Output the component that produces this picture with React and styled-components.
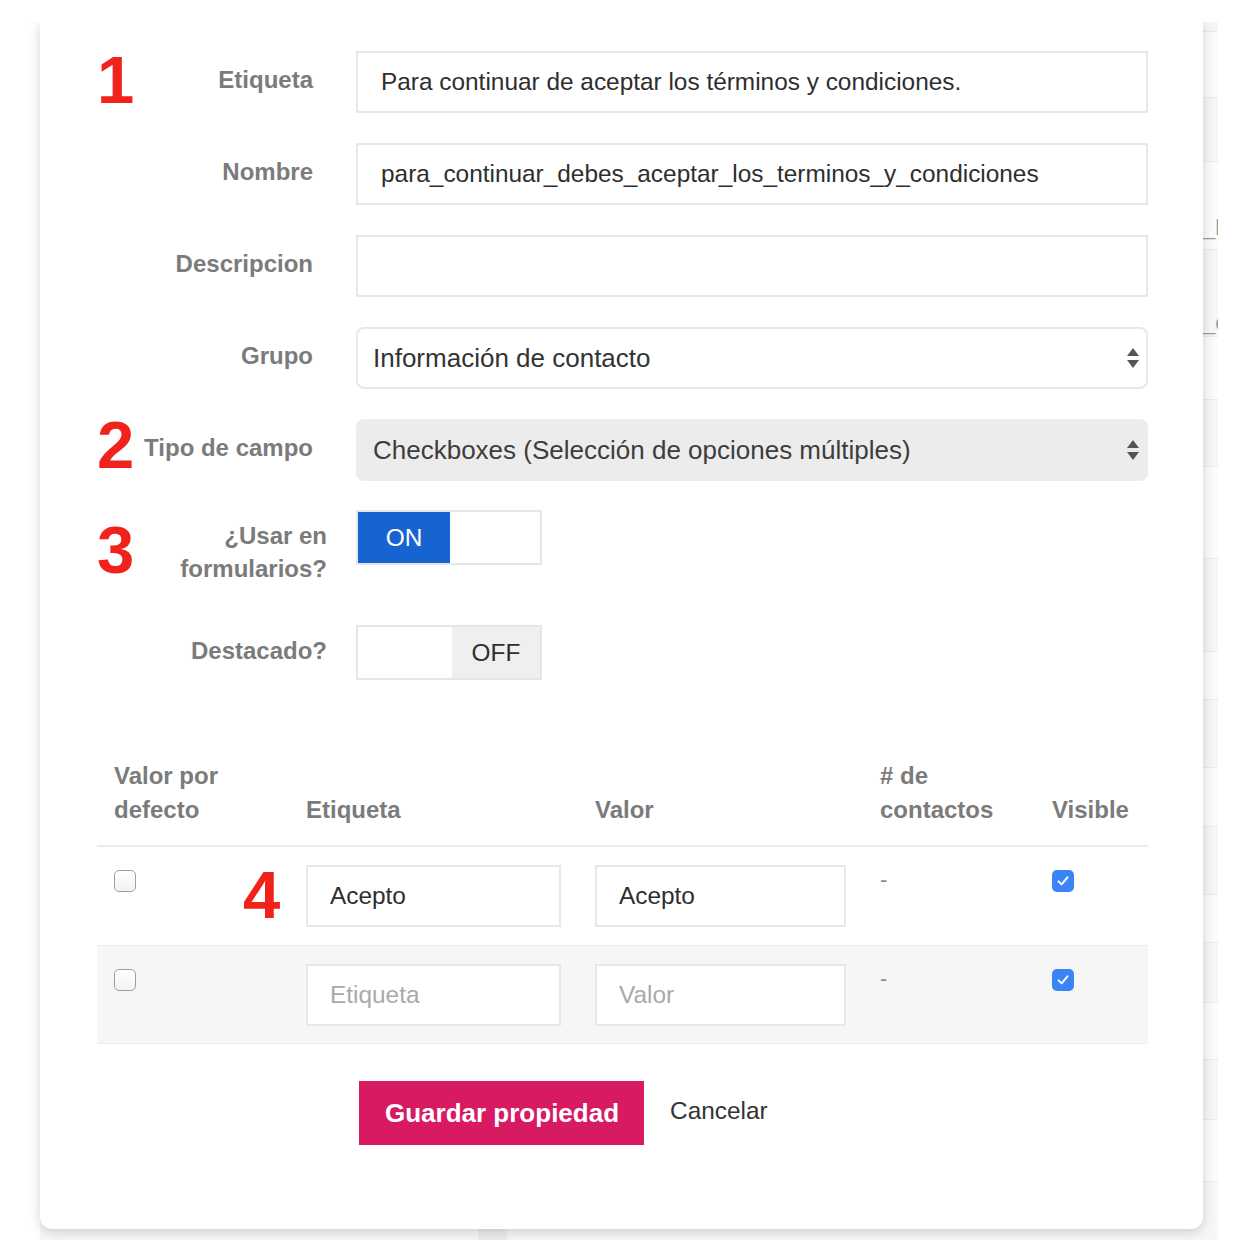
import React from 'react';
import styled, { createGlobalStyle } from 'styled-components';

const GlobalStyle = createGlobalStyle`
  html, body {
    margin: 0;
    padding: 0;
    background: #fff;
  }
  body {
    font-family: "Liberation Sans", Arial, sans-serif;
    color: #333;
  }
  * {
    box-sizing: border-box;
  }
`;

const Canvas = styled.div`
	width: 1242px;
	height: 1240px;
	padding-top: 22px;
	overflow: hidden;
	background: #fff;
`;

// the screenshot area: the page behind and the modal share one grid cell
const Shot = styled.div`
	width: 1218px;
	height: 1218px;
	overflow: hidden;
	display: grid;
	grid-template-columns: 1fr;
	grid-template-rows: 1fr;

	> * {
		grid-area: 1 / 1;
	}
`;

const Backdrop = styled.div`
	margin-left: 40px;
	display: flex;
	flex-direction: column;
`;

const BackRow = styled.div`
	flex: none;
	height: ${p => p.$h}px;
	display: flex;
	align-items: flex-end;
	padding: 0 0 ${p => p.$pb || 0}px 1163px;
	border-bottom: 1px solid #ebebeb;
	background: ${p => (p.$shade ? '#f6f6f6' : '#fbfbfb')};
	font-size: 22px;
	line-height: 26px;
	color: #9c9c9c;
	white-space: nowrap;
`;

const BackFoot = styled.div`
	flex: 1;
	display: flex;
	background: #f7f7f7;
`;

const FootBlock = styled.div`
	margin-left: 438px;
	width: 29px;
	background: #ececec;
`;

const Card = styled.div`
	margin-left: 40px;
	width: 1163px;
	align-self: start;
	background: #fff;
	border-radius: 0 0 12px 12px;
	box-shadow: 0 3px 12px rgba(0, 0, 0, 0.17);
	padding: 29px 55px 84px 57px;
`;

const FormRow = styled.div`
	display: grid;
	grid-template-columns: 259px 792px;
	margin-top: ${p => (p.$mt === undefined ? 30 : p.$mt)}px;
`;

const LabelCell = styled.div`
	display: flex;
	align-items: flex-start;
	padding-right: ${p => (p.$toggle ? 29 : 43)}px;
`;

const Num = styled.span`
	flex: none;
	width: 46px;
	margin-top: ${p => p.$dy || 0}px;
	font-size: 67px;
	font-weight: 700;
	line-height: 1;
	color: #f0221b;
`;

const Label = styled.label`
	flex: 1;
	text-align: right;
	padding-top: ${p => (p.$toggle ? 9 : 12)}px;
	font-size: 24px;
	font-weight: 700;
	line-height: 33px;
	color: #7b7b7b;
	white-space: ${p => (p.$toggle ? 'normal' : 'nowrap')};
`;

const TextInput = styled.input`
	display: block;
	width: 100%;
	height: ${p => p.$h || 62}px;
	margin: 0;
	padding: 0 ${p => p.$px || 23}px;
	border: 2px solid #e8e8e8;
	border-radius: 0;
	background: #fff;
	font: 24.4px "Liberation Sans", Arial, sans-serif;
	color: #2e2e2e;
	outline: none;

	&::placeholder {
		color: #a9a9a9;
	}
`;

const SelectBox = styled.div`
	height: 62px;
	display: flex;
	align-items: center;
	justify-content: space-between;
	padding: 0 7px 0 15px;
	border: 2px solid ${p => (p.$muted ? '#ececec' : '#e8e8e8')};
	border-radius: 8px;
	background: ${p => (p.$muted ? '#ececec' : '#fff')};
	font-size: 26px;
	color: ${p => (p.$muted ? '#3d3d3d' : '#333')};
`;

const Toggle = styled.div`
	width: 186px;
	height: 55px;
	display: flex;
	border: 2px solid #e6e6e6;
`;

const Half = styled.div`
	flex: none;
	width: ${p => p.$w}px;
	display: flex;
	align-items: center;
	justify-content: center;
	font-size: 24.4px;
	background: ${p => (p.$tone === 'on' ? '#1763cf' : p.$tone === 'off' ? '#efefef' : '#fff')};
	color: ${p => (p.$tone === 'on' ? '#fff' : '#2e2e2e')};
`;

const cols = '192px 289px 285px 172px 1fr';

const Table = styled.div`
	margin-top: 79px;
`;

const HeadRow = styled.div`
	display: grid;
	grid-template-columns: ${cols};
	align-items: end;
	padding-bottom: 18px;
	border-bottom: 2px solid #ececec;
`;

const HeadCell = styled.div`
	padding: 0 17px;
	font-size: 24px;
	font-weight: 700;
	line-height: 34px;
	color: #7b7b7b;
`;

const BodyRow = styled.div`
	display: grid;
	grid-template-columns: ${cols};
	align-items: start;
	padding: 18px 0 17px;
	border-bottom: 1px solid #ededed;
	background: ${p => (p.$shaded ? '#f6f6f6' : '#fff')};
`;

const Cell = styled.div`
	display: flex;
	justify-content: space-between;
	align-items: flex-start;
	padding: 0 ${p => (p.$pr === undefined ? 17 : p.$pr)}px 0 17px;
`;

const Dash = styled.span`
	margin-top: 1px;
	font-size: 22px;
	line-height: 28px;
	color: #8a8a8a;
`;

const Box = styled.span`
	display: inline-flex;
	align-items: center;
	justify-content: center;
	width: 22px;
	height: 22px;
	margin-top: 5px;
	border-radius: 5px;
	border: ${p => (p.$checked ? 'none' : '1.5px solid #9f9f9f')};
	background: ${p => (p.$checked ? '#3a84f5' : 'linear-gradient(#fff, #f2f2f2)')};
`;

const Actions = styled.div`
	display: flex;
	align-items: center;
	gap: 26px;
	margin-top: 37px;
	padding-left: 262px;
`;

const SaveButton = styled.button`
	height: 64px;
	padding: 0 25px 0 26px;
	border: none;
	border-radius: 0;
	background: #d71a61;
	color: #fff;
	font: 700 26px "Liberation Sans", Arial, sans-serif;
`;

const CancelLink = styled.span`
	margin-top: -4px;
	font-size: 24.4px;
	color: #333;
`;

const Arrows = () => (
	<svg width="12" height="24" viewBox="0 0 12 24">
		<path d="M6 2 L12 10 H0 Z" fill="#555" />
		<path d="M6 22 L12 14 H0 Z" fill="#555" />
	</svg>
);

const Check = ({ checked }) => (
	<Box $checked={checked}>
		{checked && (
			<svg width="16" height="16" viewBox="0 0 16 16">
				<path d="M3.5 8.4 L6.6 11.4 L12.5 4.4" fill="none" stroke="#fff" strokeWidth="2" strokeLinecap="round" strokeLinejoin="round" />
			</svg>
		)}
	</Box>
);

const backRows = [
	{ h: 10, shade: true },
	{ h: 66 },
	{ h: 64, shade: true },
	{ h: 88, text: '_lo', pb: 8 },
	{ h: 87, shade: true, text: '_c', pb: 0 },
	{ h: 63 },
	{ h: 67, shade: true },
	{ h: 92 },
	{ h: 93, shade: true },
	{ h: 48 },
	{ h: 68, shade: true },
	{ h: 59 },
	{ h: 68, shade: true },
	{ h: 48 },
	{ h: 60, shade: true },
	{ h: 57 },
	{ h: 60, shade: true },
	{ h: 62 },
];

const options = [
	{ label: 'Acepto', value: 'Acepto', mark: '4' },
	{ label: '', value: '' },
];

export default function App() {
	return (
		<Canvas>
			<GlobalStyle />
			<Shot>
				<Backdrop>
					{backRows.map((r, i) => (
						<BackRow key={i} $h={r.h} $shade={r.shade} $pb={r.pb}>
							{r.text}
						</BackRow>
					))}
					<BackFoot>
						<FootBlock />
					</BackFoot>
				</Backdrop>

				<Card>
					<FormRow $mt={0}>
						<LabelCell>
							<Num $dy={-5}>1</Num>
							<Label>Etiqueta</Label>
						</LabelCell>
						<TextInput defaultValue="Para continuar de aceptar los términos y condiciones." />
					</FormRow>

					<FormRow>
						<LabelCell>
							<Label>Nombre</Label>
						</LabelCell>
						<TextInput defaultValue="para_continuar_debes_aceptar_los_terminos_y_condiciones" />
					</FormRow>

					<FormRow>
						<LabelCell>
							<Label>Descripcion</Label>
						</LabelCell>
						<TextInput defaultValue="" />
					</FormRow>

					<FormRow>
						<LabelCell>
							<Label>Grupo</Label>
						</LabelCell>
						<SelectBox>
							<span>Información de contacto</span>
							<Arrows />
						</SelectBox>
					</FormRow>

					<FormRow>
						<LabelCell>
							<Num $dy={-8}>2</Num>
							<Label>Tipo de campo</Label>
						</LabelCell>
						<SelectBox $muted>
							<span>Checkboxes (Selección de opciones múltiples)</span>
							<Arrows />
						</SelectBox>
					</FormRow>

					<FormRow $mt={29}>
						<LabelCell $toggle>
							<Num $dy={6}>3</Num>
							<Label $toggle>¿Usar en formularios?</Label>
						</LabelCell>
						<div>
							<Toggle>
								<Half $tone="on" $w={92}>ON</Half>
								<Half $w={90} />
							</Toggle>
						</div>
					</FormRow>

					<FormRow $mt={40}>
						<LabelCell $toggle>
							<Label $toggle>Destacado?</Label>
						</LabelCell>
						<div>
							<Toggle>
								<Half $w={94} />
								<Half $tone="off" $w={88}>OFF</Half>
							</Toggle>
						</div>
					</FormRow>

					<Table>
						<HeadRow>
							<HeadCell>Valor por defecto</HeadCell>
							<HeadCell>Etiqueta</HeadCell>
							<HeadCell>Valor</HeadCell>
							<HeadCell># de contactos</HeadCell>
							<HeadCell>Visible</HeadCell>
						</HeadRow>

						{options.map((o, i) => (
							<BodyRow key={i} $shaded={i % 2 === 1}>
								<Cell $pr={0}>
									<Check />
									{o.mark && <Num $dy={-4}>{o.mark}</Num>}
								</Cell>
								<Cell>
									<TextInput $px={22} defaultValue={o.label} placeholder="Etiqueta" />
								</Cell>
								<Cell>
									<TextInput $px={22} defaultValue={o.value} placeholder="Valor" />
								</Cell>
								<Cell>
									<Dash>-</Dash>
								</Cell>
								<Cell>
									<Check checked />
								</Cell>
							</BodyRow>
						))}
					</Table>

					<Actions>
						<SaveButton type="button">Guardar propiedad</SaveButton>
						<CancelLink>Cancelar</CancelLink>
					</Actions>
				</Card>
			</Shot>
		</Canvas>
	);
}
